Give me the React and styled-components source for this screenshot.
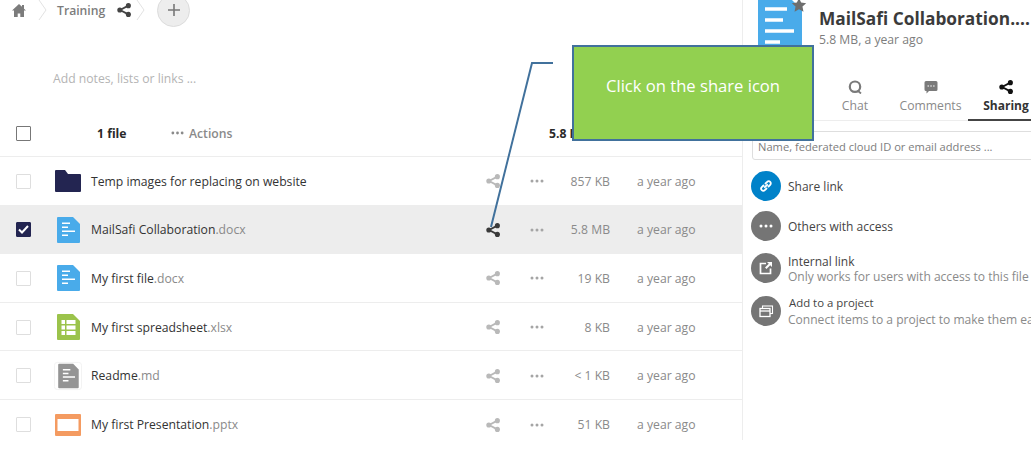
import styled, { createGlobalStyle } from "styled-components";

const GlobalStyle = createGlobalStyle`
  html, body {
    margin: 0;
    height: 100%;
    overflow: hidden;
    background: #fff;
    font-family: "Open Sans", "Liberation Sans", sans-serif;
    color: #222;
  }
`;

const Page = styled.div`
  position: relative;
  width: 1031px;
  height: 449px;
  overflow: hidden;
  display: flex;
  align-items: flex-start;
`;

const Main = styled.main`
  width: 742px;
  flex: none;
`;

const Crumbs = styled.div`
  display: flex;
  align-items: center;
  height: 34px;
  margin-top: -7px;
  padding-left: 12px;
  color: #888;
`;

const CrumbName = styled.span`
  font-size: 12.2px;
  font-weight: 600;
  color: #7c7c7c;
  margin: 0 12px 0 10px;
`;

const PlusButton = styled.div`
  width: 33px;
  height: 33px;
  margin-left: 12px;
  border-radius: 50%;
  background: #ededed;
  border: 1px solid #dcdcdc;
  box-sizing: border-box;
  display: flex;
  align-items: center;
  justify-content: center;
`;

const Notes = styled.div`
  padding: 43px 0 0 53px;
  height: 30px;
  line-height: 18px;
  font-size: 12.2px;
  color: #b4b4b4;
`;

const HeaderRow = styled.div`
  display: flex;
  align-items: center;
  height: 46px;
  padding-top: 3px;
  margin-top: 7px;
  border-bottom: 1px solid #ededed;
  font-size: 12.2px;
  font-weight: 700;
`;

const Box = styled.span`
  flex: none;
  width: 15px;
  height: 15px;
  margin-left: 16px;
  box-sizing: border-box;
  border: 1px solid ${(p) => (p.$dark ? "#777" : "#dedede")};
  border-radius: 1px;
  display: flex;
  align-items: center;
  justify-content: center;
  background: ${(p) => (p.$checked ? "#232551" : "#fff")};
  border-color: ${(p) => (p.$checked ? "#232551" : undefined)};
`;

const FileCount = styled.span`
  margin-left: 66px;
  width: 74px;
  color: #2a2a2a;
`;

const Actions = styled.span`
  display: flex;
  align-items: center;
  gap: 5px;
  width: 378px;
  color: #8a8a8a;
  font-weight: 600;
`;

const TotalSize = styled.span`
  color: #2a2a2a;
`;

const FileRow = styled.div`
  display: flex;
  align-items: center;
  height: 48.6px;
  padding-top: 1px;
  box-sizing: border-box;
  border-bottom: ${(p) => (p.$last ? "none" : "1px solid #ededed")};
  background: ${(p) => (p.$selected ? "#ededed" : "#fff")};
  font-size: 12.2px;
`;

const IconSlot = styled.span`
  flex: none;
  width: 28px;
  height: 30px;
  margin-left: 23px;
  display: flex;
  align-items: center;
  justify-content: center;
`;

const FileName = styled.span`
  flex: none;
  width: 395px;
  margin-left: 9px;
  color: #333;
  white-space: nowrap;
`;

const Extension = styled.span`
  color: #8a8a8a;
`;

const RowIcons = styled.span`
  flex: none;
  width: 80px;
  display: flex;
  align-items: center;
  gap: 30px;
`;

const Size = styled.span`
  flex: none;
  width: 44px;
  text-align: right;
  color: #8a8a8a;
`;

const Age = styled.span`
  margin-left: 27px;
  color: #8a8a8a;
  white-space: nowrap;
`;

const Sidebar = styled.aside`
  width: 288px;
  height: 440px;
  flex: none;
  border-left: 1px solid #ededed;
  white-space: nowrap;
`;

const SideHead = styled.header`
  display: flex;
  height: 76px;
  padding-left: 15px;
`;

const BigDoc = styled.div`
  position: relative;
  width: 44px;
  height: 52px;
  flex: none;
  overflow: visible;
`;

const StarMark = styled.svg`
  position: absolute;
  top: -3px;
  right: -5px;
`;

const HeadText = styled.div`
  margin-left: 17px;
  padding-top: 7px;
`;

const Title = styled.h2`
  margin: 0;
  font-size: 17.3px;
  line-height: 24px;
  font-weight: 700;
  color: #3b3b3b;
`;

const Meta = styled.div`
  font-size: 12.2px;
  line-height: 17px;
  color: #7d7d7d;
`;

const Tabs = styled.nav`
  display: flex;
  height: 44px;
  padding-left: 74px;
  border-bottom: 1px solid #ededed;
`;

const Tab = styled.div`
  box-sizing: border-box;
  width: ${(p) => p.$width}px;
  flex: none;
  display: flex;
  flex-direction: column;
  align-items: center;
  padding-top: 4px;
  font-size: ${(p) => (p.$active ? "12px" : "12.2px")};
  line-height: 18px;
  gap: 3px;
  color: ${(p) => (p.$active ? "#333" : "#8a8a8a")};
  font-weight: ${(p) => (p.$active ? 700 : 400)};
  border-bottom: ${(p) => (p.$active ? "2px solid #444" : "none")};
  height: ${(p) => (p.$active ? "45px" : "44px")};
`;

const ShareInput = styled.div`
  margin: 10px 0 0 9px;
  width: 300px;
  height: 29px;
  box-sizing: border-box;
  border: 1px solid #dedede;
  border-radius: 3px;
  padding-left: 5px;
  font-size: 11.15px;
  line-height: 29px;
  color: #7d7d7d;
`;

const ShareList = styled.div`
  display: flex;
  flex-direction: column;
  margin: 6px 0 0 8px;
`;

const ShareRow = styled.div`
  display: flex;
  align-items: center;
  height: ${(p) => p.$height}px;
`;

const Round = styled.span`
  flex: none;
  width: 30px;
  height: 30px;
  border-radius: 50%;
  background: ${(p) => (p.$blue ? "#0082c9" : "#757575")};
  display: flex;
  align-items: center;
  justify-content: center;
`;

const ShareText = styled.div`
  margin-left: 7px;
  padding-top: ${(p) => p.$nudge || 0}px;
  font-size: 12px;
  line-height: 15px;
  color: #444;
`;

const ProjectName = styled.div`
  margin-left: 1px;
  font-size: 11.4px;
`;

const ShareHint = styled.div`
  font-size: 12.05px;
  color: #8a8a8a;
  line-height: ${(p) => p.$line || 16}px;
`;

const Callout = styled.div`
  position: absolute;
  left: 572px;
  top: 45px;
  width: 242px;
  height: 96px;
  box-sizing: border-box;
  background: #92d050;
  border: 2px solid #41719c;
  padding-top: 27px;
  text-align: center;
  font-size: 16.6px;
  line-height: 24px;
  color: #fff;
`;

const Leader = styled.svg`
  position: absolute;
  left: 485px;
  top: 55px;
`;

function ShareIcon({ size = 14, color = "#b9b9b9" }) {
  return (
    <svg width={size} height={size} viewBox="0 0 16 16">
      <path d="M13 3 3.500 8 13 13" fill="none" stroke={color} strokeWidth="2" />
      <circle cx="13" cy="3" r="2.900" fill={color} />
      <circle cx="3.200" cy="8" r="2.900" fill={color} />
      <circle cx="13" cy="13" r="2.900" fill={color} />
    </svg>
  );
}

function Dots({ color = "#a5a5a5", width = 14 }) {
  return (
    <svg width={width} height="4" viewBox="0 0 14 4">
      <circle cx="2" cy="2" r="1.500" fill={color} />
      <circle cx="7" cy="2" r="1.500" fill={color} />
      <circle cx="12" cy="2" r="1.500" fill={color} />
    </svg>
  );
}

function Chevron() {
  return (
    <svg width="9" height="22" viewBox="0 0 9 22">
      <path d="M1 1 8 11 1 21" fill="none" stroke="#e2e2e2" strokeWidth="1" />
    </svg>
  );
}

function DocIcon({ color = "#49abea", width = 23, height = 26 }) {
  return (
    <svg width={width} height={height} viewBox="0 0 23 26">
      <path d="M1 0H16L23 7V25a1 1 0 0 1-1 1H1a1 1 0 0 1-1-1V1a1 1 0 0 1 1-1Z" fill={color} />
      <path d="M5 6.200h8M5 10.200h6M5 14.200h13M5 18.200h6" stroke="#fff" strokeWidth="1.600" />
    </svg>
  );
}

function SheetIcon() {
  return (
    <svg width="23" height="26" viewBox="0 0 23 26">
      <path d="M1 0H16L23 7V25a1 1 0 0 1-1 1H1a1 1 0 0 1-1-1V1a1 1 0 0 1 1-1Z" fill="#9bc34b" />
      <path d="M4.500 6h3.500v4H4.500ZM9.500 6h9v4H9.500ZM4.500 11.500h3.500v4H4.500ZM9.500 11.500h9v4H9.500ZM4.500 17h3.500v4H4.500ZM9.500 17h9v4H9.500Z" fill="#fff" />
    </svg>
  );
}

function FolderIcon() {
  return (
    <svg width="26" height="22" viewBox="0 0 26 22">
      <path d="M1 0H10L13 4H25a1 1 0 0 1 1 1V21a1 1 0 0 1-1 1H1a1 1 0 0 1-1-1V1a1 1 0 0 1 1-1Z" fill="#232551" />
    </svg>
  );
}

function SlidesIcon() {
  return (
    <svg width="26" height="22" viewBox="0 0 26 22">
      <rect width="26" height="22" rx="1" fill="#f49b61" />
      <rect x="2.500" y="5" width="21" height="12" fill="#fff" />
    </svg>
  );
}

function ReadmeIcon() {
  return (
    <svg width="30" height="30" viewBox="0 0 30 30">
      <rect x=".5" y=".5" width="29" height="29" rx="3" fill="#fff" stroke="#f1f1f1" />
      <g transform="translate(4.500 2)">
        <path d="M1 0H16L22 6V25a1 1 0 0 1-1 1H1a1 1 0 0 1-1-1V1a1 1 0 0 1 1-1Z" fill="#949494" />
        <path d="M5 6.200h8M5 10.200h6M5 14.200h13M5 18.200h6" stroke="#fff" strokeWidth="1.600" />
      </g>
    </svg>
  );
}

const files = [
  { name: "Temp images for replacing on website", ext: "", size: "857 KB", icon: <FolderIcon /> },
  { name: "MailSafi Collaboration", ext: ".docx", size: "5.8 MB", icon: <DocIcon />, selected: true },
  { name: "My first file", ext: ".docx", size: "19 KB", icon: <DocIcon /> },
  { name: "My first spreadsheet", ext: ".xlsx", size: "8 KB", icon: <SheetIcon /> },
  { name: "Readme", ext: ".md", size: "< 1 KB", icon: <ReadmeIcon /> },
  { name: "My first Presentation", ext: ".pptx", size: "51 KB", icon: <SlidesIcon />, last: true },
];

export default function App() {
  return (
    <Page>
      <GlobalStyle />
      <Main>
        <Crumbs>
          <svg width="14" height="13" viewBox="0 0 14 13">
            <path d="M7 0 10 2.800V1H12V4.700L14 6.500H12V13H8.300V9.500H5.700V13H2V6.500H0Z" fill="#7c7c7c" />
          </svg>
          <span style={{ width: 12 }} />
          <Chevron />
          <CrumbName>Training</CrumbName>
          <ShareIcon color="#444" />
          <span style={{ width: 5 }} />
          <Chevron />
          <PlusButton>
            <svg width="12" height="12" viewBox="0 0 12 12">
              <path d="M6 0V12M0 6H12" stroke="#777" strokeWidth="1.600" />
            </svg>
          </PlusButton>
        </Crumbs>
        <Notes>Add notes, lists or links ...</Notes>
        <HeaderRow>
          <Box $dark />
          <FileCount>1 file</FileCount>
          <Actions>
            <Dots color="#8a8a8a" width={13} />
            Actions
          </Actions>
          <TotalSize>5.8 MB</TotalSize>
        </HeaderRow>
        {files.map((file) => (
          <FileRow key={file.name} $selected={file.selected} $last={file.last}>
            <Box $checked={file.selected}>
              {file.selected && (
                <svg width="11" height="9" viewBox="0 0 11 9">
                  <path d="M1 4.500 4 7.500 10 1" fill="none" stroke="#fff" strokeWidth="2" />
                </svg>
              )}
            </Box>
            <IconSlot>{file.icon}</IconSlot>
            <FileName>
              {file.name}
              <Extension>{file.ext}</Extension>
            </FileName>
            <RowIcons>
              <ShareIcon color={file.selected ? "#3a3a3a" : "#b9b9b9"} />
              <Dots />
            </RowIcons>
            <Size>{file.size}</Size>
            <Age>a year ago</Age>
          </FileRow>
        ))}
      </Main>
      <Sidebar>
        <SideHead>
          <BigDoc>
            <svg width="44" height="52" viewBox="0 0 44 52">
              <path d="M0 0H34L44 10V52H0Z" fill="#49abea" />
              <path d="M7 9h22M7 20h18M7 31h29M7 42h15" stroke="#fff" strokeWidth="3.500" />
            </svg>
            <StarMark width="16" height="16" viewBox="0 0 24 24">
              <path d="M12 1.500 15.200 8.400 22.800 9.300 17.200 14.400 18.700 22 12 18.200 5.300 22 6.800 14.400 1.200 9.300 8.800 8.400Z" fill="#6e6e6e" />
            </StarMark>
          </BigDoc>
          <HeadText>
            <Title>MailSafi Collaboration....</Title>
            <Meta>5.8 MB, a year ago</Meta>
          </HeadText>
        </SideHead>
        <Tabs>
          <Tab $width={76}>
            <svg width="14" height="14" viewBox="0 0 14 14">
              <circle cx="7" cy="6.700" r="5.200" fill="none" stroke="#7a7a7a" strokeWidth="2.200" />
              <path d="M9.500 10.500 13 13.500" stroke="#7a7a7a" strokeWidth="1.800" />
            </svg>
            Chat
          </Tab>
          <Tab $width={75}>
            <svg width="14" height="14" viewBox="0 0 14 14">
              <path d="M2 1h10a1.500 1.500 0 0 1 1.500 1.500v7A1.500 1.500 0 0 1 12 11H5l-2.500 2.500V11H2A1.500 1.500 0 0 1 .5 9.500v-7A1.500 1.500 0 0 1 2 1Z" fill="#7a7a7a" />
              <path d="M3.500 6h1.500M6.300 6h1.500M9.100 6h1.500" stroke="#fff" strokeWidth="1.200" />
            </svg>
            Comments
          </Tab>
          <Tab $width={76} $active>
            <ShareIcon color="#111" />
            Sharing
          </Tab>
        </Tabs>
        <ShareInput>Name, federated cloud ID or email address ...</ShareInput>
        <ShareList>
          <ShareRow $height={40}>
            <Round $blue>
              <svg width="16" height="16" viewBox="0 0 16 16">
                <path d="M6.800 9.200 9.200 6.800M5.500 7.500 3.800 9.200a2.100 2.100 0 0 0 3 3L8.500 10.500M7.500 5.500 9.200 3.800a2.100 2.100 0 0 1 3 3L10.500 8.500" fill="none" stroke="#fff" strokeWidth="1.800" strokeLinecap="round" />
              </svg>
            </Round>
            <ShareText>Share link</ShareText>
          </ShareRow>
          <ShareRow $height={40}>
            <Round>
              <Dots color="#fff" width={14} />
            </Round>
            <ShareText>Others with access</ShareText>
          </ShareRow>
          <ShareRow $height={43}>
            <Round>
              <svg width="14" height="14" viewBox="0 0 14 14">
                <path d="M7 2.500H1.500V12.500H11.500V7.500" fill="none" stroke="#fff" strokeWidth="1.700" />
                <path d="M8 1h5v5l-1.800-1.800L7.500 8 6 6.500 9.800 2.800Z" fill="#fff" />
              </svg>
            </Round>
            <ShareText $nudge={4}>
              Internal link
              <ShareHint>Only works for users with access to this file</ShareHint>
            </ShareText>
          </ShareRow>
          <ShareRow $height={43}>
            <Round>
              <svg width="15" height="14" viewBox="0 0 15 14">
                <rect x="3.500" y="2" width="10" height="7.500" fill="none" stroke="#fff" strokeWidth="1.100" />
                <rect x="1" y="4.500" width="10" height="8" fill="#757575" stroke="#fff" strokeWidth="1.300" />
                <path d="M1 7H11" stroke="#fff" strokeWidth="1.300" />
              </svg>
            </Round>
            <ShareText $nudge={3}>
              <ProjectName>Add to a project</ProjectName>
              <ShareHint $line={19}>Connect items to a project to make them easier to find</ShareHint>
            </ShareText>
          </ShareRow>
        </ShareList>
      </Sidebar>
      <Leader width="70" height="175" viewBox="0 0 70 175">
        <path d="M68 8H47L6 172" fill="none" stroke="#41719c" strokeWidth="2" />
      </Leader>
      <Callout>Click on the share icon</Callout>
    </Page>
  );
}
